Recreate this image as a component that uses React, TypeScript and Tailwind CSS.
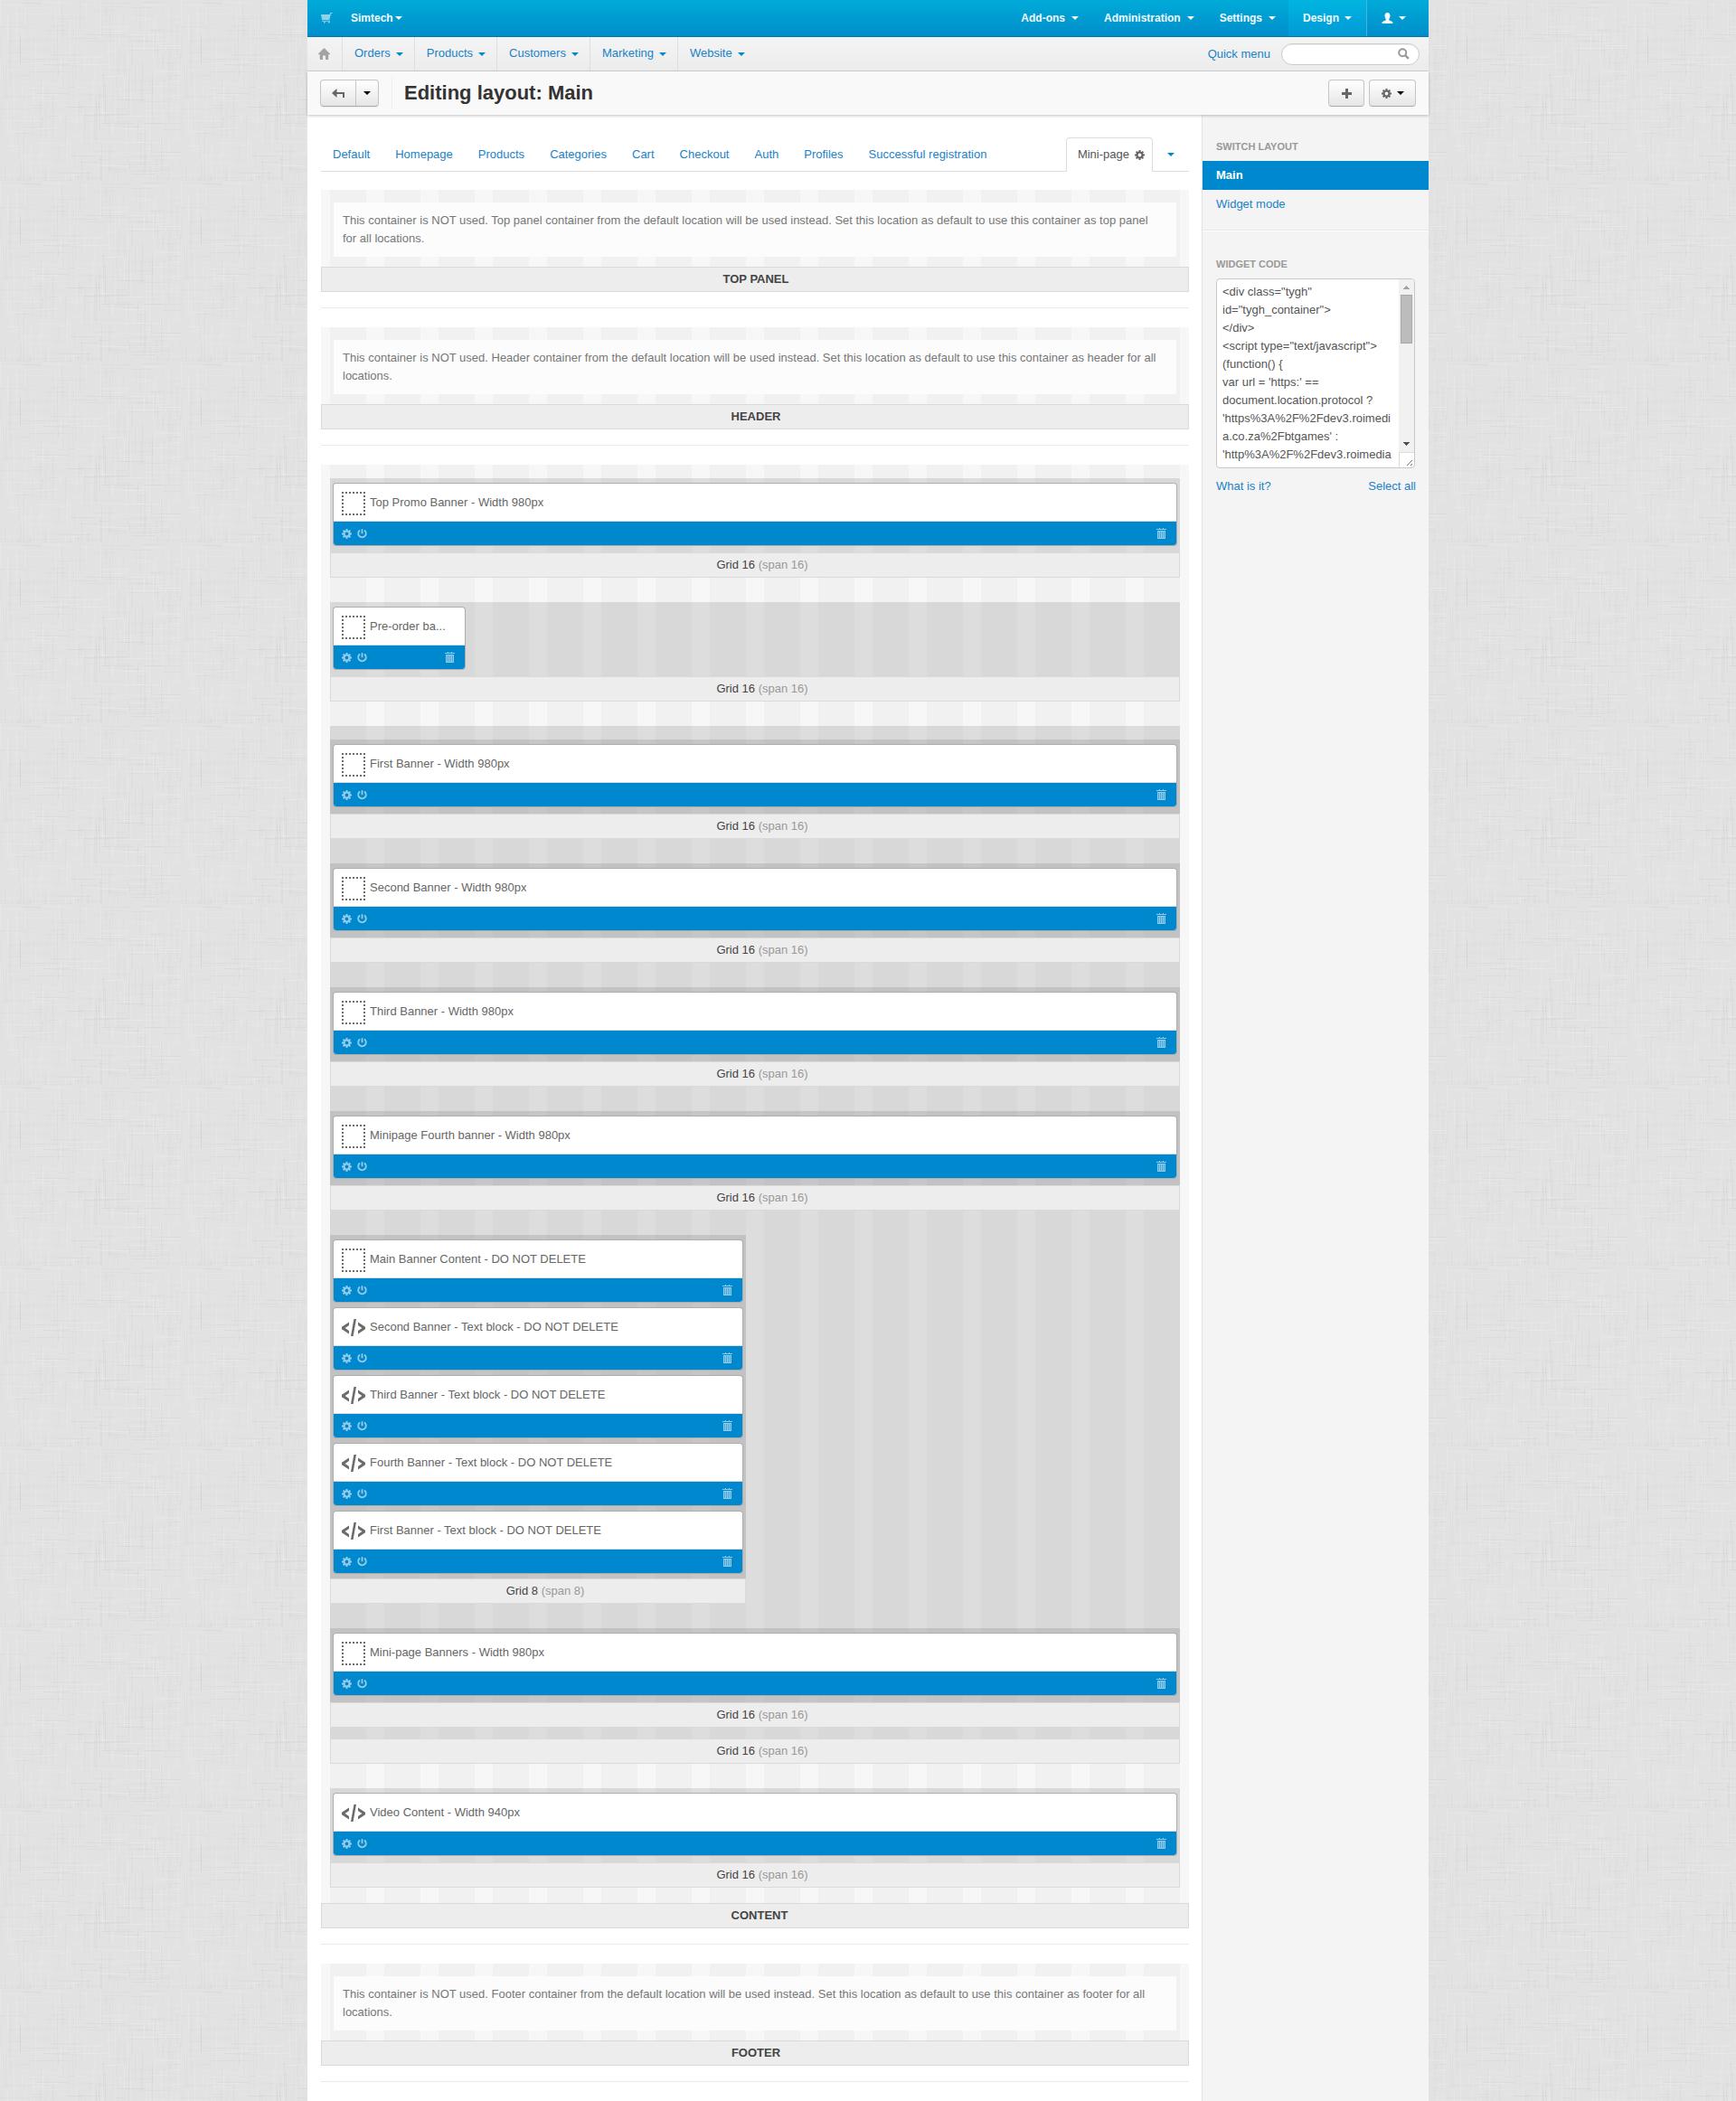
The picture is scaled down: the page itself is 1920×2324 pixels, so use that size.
import React from "react";

/* ---------- linen backdrop ---------- */

function makeThreads() {
  let seed = 4217;
  const rnd = () => {
    seed = (seed * 16807) % 2147483647;
    return seed / 2147483647;
  };
  const out: { x: number; y: number; w: number; h: number; dark: boolean; o: number }[] = [];
  for (let i = 0; i < 560; i++) {
    const horizontal = i % 2 === 0;
    const len = Math.round(8 + rnd() * 40);
    const x = Math.floor(rnd() * 200);
    const y = Math.floor(rnd() * 200);
    const dark = rnd() < 0.5;
    const o = dark ? 0.008 + rnd() * 0.022 : 0.06 + rnd() * 0.1;
    out.push({ x, y, w: horizontal ? len : 1, h: horizontal ? 1 : len, dark, o });
  }
  return out;
}
const threads = makeThreads();

function Linen() {
  return (
    <svg className="absolute inset-0 h-full w-full" aria-hidden="true" shapeRendering="crispEdges">
      <defs>
        <pattern id="linen" width="200" height="200" patternUnits="userSpaceOnUse">
          <rect width="200" height="200" fill="#e2e2e2" />
          {threads.map((t, i) => (
            <rect key={i} x={t.x} y={t.y} width={t.w} height={t.h} fill={t.dark ? "#000" : "#fff"} opacity={t.o} />
          ))}
        </pattern>
      </defs>
      <rect width="100%" height="100%" fill="url(#linen)" />
    </svg>
  );
}

/* ---------- icons ---------- */

function Caret({ className = "" }: { className?: string }) {
  return (
    <svg width="8" height="4" viewBox="0 0 8 4" fill="currentColor" className={`shrink-0 ${className}`} aria-hidden="true">
      <path d="M0 0h8L4 4z" />
    </svg>
  );
}

function Gear({ className = "" }: { className?: string }) {
  return (
    <svg width="11" height="11" viewBox="0 0 22 22" className={`shrink-0 ${className}`} aria-hidden="true">
      <circle cx="11" cy="11" r="6" fill="none" stroke="currentColor" strokeWidth="4.4" />
      <g stroke="currentColor" strokeWidth="4">
        <path d="M11 0v4M11 18v4M0 11h4M18 11h4M3.2 3.2l3 3M15.8 15.8l3 3M18.8 3.2l-3 3M6.2 15.8l-3 3" />
      </g>
    </svg>
  );
}

function Power() {
  return (
    <svg width="11" height="11" viewBox="0 0 11 11" fill="none" stroke="currentColor" strokeWidth="1.8" aria-hidden="true">
      <path d="M3 1.6A4.3 4.3 0 1 0 8 1.6M5.5 0.3v5" />
    </svg>
  );
}

function Trash() {
  return (
    <svg width="11" height="12" viewBox="0 0 11 12" fill="currentColor" shapeRendering="crispEdges" aria-hidden="true">
      <path d="M3 0h1v1H3zM7 0h1v1H7zM0 1h11v1H0zM1 3h9v1H1zM1 4h1v7H1zM3 4h1v7H3zM5 4h1v7H5zM7 4h1v7H7zM9 4h1v7H9zM1 11h9v1H1z" />
      <path d="M2 4h7v7H2z" opacity="0.45" />
    </svg>
  );
}

function Cart() {
  return (
    <svg width="13" height="12" viewBox="0 0 13 12" fill="currentColor" aria-hidden="true">
      <path d="M0 2h9.6L10.3 0H12.5v1H11L9.3 8H1.2zM1 8.8h9v.9H1zM3 10h1.6v1.6H3zM8 10h1.6v1.6H8z" />
    </svg>
  );
}

function Home() {
  return (
    <svg width="13" height="13" viewBox="0 0 13 13" fill="currentColor" aria-hidden="true">
      <path d="M6.5 0L13 6.5v.7h-1.8V13H8V8.5H5V13H1.8V7.2H0v-.7z" />
    </svg>
  );
}

function BackArrow() {
  return (
    <svg width="15" height="11" viewBox="0 0 15 11" aria-hidden="true">
      <path d="M0 5L5.5 0v10z" fill="currentColor" />
      <path d="M4 5h9v5" fill="none" stroke="currentColor" strokeWidth="2" />
    </svg>
  );
}

function Person() {
  return (
    <svg width="13" height="12" viewBox="0 0 13 12" fill="currentColor" aria-hidden="true">
      <path d="M6.5 0C8.600 0 9.500 1.300 9.500 3.200S8.900 6.200 8.300 6.900v1.300c.4.700 4.200 1.300 4.200 2.600V12H.5v-1.200c0-1.300 3.800-1.900 4.200-2.600V6.900C4.100 6.200 3.500 5.100 3.500 3.200S4.400 0 6.500 0z" />
    </svg>
  );
}

function Magnifier() {
  return (
    <svg width="13" height="13" viewBox="0 0 13 13" fill="none" stroke="#999" aria-hidden="true">
      <circle cx="5.200" cy="5.200" r="4" strokeWidth="2" />
      <path d="M8.300 8.300l3.600 3.600" strokeWidth="2.400" />
    </svg>
  );
}

function Plus() {
  return (
    <svg width="12" height="12" viewBox="0 0 12 12" fill="currentColor" shapeRendering="crispEdges" aria-hidden="true">
      <path d="M5 1h3v4h4v3H8v4H5V8H1V5h4z" />
    </svg>
  );
}

function DottedSquare() {
  return (
    <svg width="26" height="26" viewBox="0 0 26 26" stroke="#6b6b6b" strokeWidth="2" strokeDasharray="2 2" className="shrink-0" aria-hidden="true">
      <path d="M0 1h26M0 25h26M1 0v26M25 0v26" />
    </svg>
  );
}

function CodeIcon() {
  return (
    <svg width="26" height="26" viewBox="0 0 26 26" fill="#6b6b6b" className="shrink-0" aria-hidden="true">
      <path d="M8 6.500v3.600L3.600 13 8 15.900v3.600L0 14.300v-2.600zM18 6.500v3.600L22.400 13 18 15.900v3.600l8-5.200v-2.600z" />
      <path d="M13.400 3H16l-3.400 19H10z" />
    </svg>
  );
}

/* ---------- top bars ---------- */

function TopItem({ label }: { label: string }) {
  return (
    <button type="button" className="flex h-10 items-center gap-[7px] px-3.5">
      {label}
      <Caret />
    </button>
  );
}

function TopBar() {
  return (
    <header className="flex h-[41px] items-stretch border-b border-[#0278ab] bg-linear-to-b from-[#00abd8] to-[#008dca] pl-[15px] text-[12px] font-bold text-[#f2fafd]">
      <a href="#store" aria-label="Storefront" className="flex items-center text-white/55">
        <Cart />
      </a>
      <button type="button" className="ml-5 flex items-center gap-0.5">
        Simtech
        <Caret />
      </button>
      <nav className="ml-auto flex">
        <TopItem label="Add-ons" />
        <TopItem label="Administration" />
        <TopItem label="Settings" />
        <button type="button" className="flex h-10 items-center gap-1.5 border-r border-[#4db1e0] bg-linear-to-b from-[#00b5e0] to-[#0099d6] pr-4 pl-4">
          Design
          <Caret />
        </button>
        <button type="button" aria-label="Account" className="flex h-10 items-center gap-1.5 pr-[25px] pl-4">
          <Person />
          <Caret />
        </button>
      </nav>
    </header>
  );
}

function NavBar() {
  return (
    <div className="flex h-[38px] items-stretch border-b border-[#d5d5d5] bg-linear-to-b from-[#f4f4f4] to-[#ececec] text-[13px] text-[#1a82c8]">
      <a href="#home" aria-label="Home" className="flex w-[39px] items-center border-r border-[#dedede] pl-3 text-[#a3a3a3]">
        <Home />
      </a>
      {["Orders", "Products", "Customers", "Marketing", "Website"].map((t, i) => (
        <button
          type="button"
          key={t}
          className={`flex items-center gap-1.5 pr-3 pb-0.5 pl-[13px] ${i < 4 ? "border-r border-[#dedede]" : ""}`}
        >
          {t}
          <Caret className="mt-0.5 text-[#0088cc]" />
        </button>
      ))}
      <div className="ml-auto flex items-center gap-3 pr-2.5">
        <a href="#quick">Quick menu</a>
        <label className="flex h-6 w-[153px] items-center rounded-full border border-[#ccc] bg-white pr-2.5 pl-3 shadow-[inset_0_1px_1px_rgba(0,0,0,0.075)]">
          <input type="text" aria-label="Search" className="min-w-0 flex-1 bg-transparent outline-none" />
          <Magnifier />
        </label>
      </div>
    </div>
  );
}

function TitleBar() {
  return (
    <div className="relative flex h-12 items-center bg-[#f9f9f9] pr-3.5 pl-3.5 shadow-[0_1px_3px_rgba(0,0,0,0.25)]">
      <div className="flex h-[30px] overflow-hidden rounded border border-[#c5c5c5] border-b-[#aaa] bg-linear-to-b from-white to-[#e6e6e6] shadow-[0_1px_1px_rgba(0,0,0,0.05)]">
        <button type="button" aria-label="Back" className="flex w-[39px] items-center justify-center border-r border-[#c5c5c5] text-[#666]">
          <BackArrow />
        </button>
        <button type="button" aria-label="Back options" className="flex w-6 items-center justify-center text-black">
          <Caret />
        </button>
      </div>
      <div className="ml-3.5 h-9 w-px bg-[#ededed]" />
      <h1 className="ml-[13px] text-[22px] leading-6 font-bold text-[#333]">Editing layout: Main</h1>
      <div className="ml-auto flex gap-[5px]">
        <button type="button" aria-label="Add" className="flex h-[30px] w-10 items-center justify-center rounded border border-[#c5c5c5] border-b-[#aaa] bg-linear-to-b from-white to-[#e6e6e6] text-[#666]">
          <Plus />
        </button>
        <button type="button" aria-label="Settings" className="flex h-[30px] w-[52px] items-center justify-center gap-1.5 rounded border border-[#c5c5c5] border-b-[#aaa] bg-linear-to-b from-white to-[#e6e6e6] text-[#666]">
          <Gear />
          <Caret className="text-black" />
        </button>
      </div>
    </div>
  );
}

/* ---------- layout editor ---------- */

const locations = ["Default", "Homepage", "Products", "Categories", "Cart", "Checkout", "Auth", "Profiles", "Successful registration"];

function Tabs() {
  return (
    <nav className="flex h-[38px] border-b border-[#dcdcdc] text-[13px] leading-5 text-[#1a82c8]">
      {locations.map((t) => (
        <a key={t} href="#location" className="mr-0.5 px-[13px] pt-[9px] whitespace-nowrap">
          {t}
        </a>
      ))}
      <a href="#mini-page" aria-current="page" className="-mb-px ml-auto flex h-[38px] gap-1.5 rounded-t border border-b-0 border-[#ddd] bg-white pt-2 pr-2 pl-3 text-[#555]">
        Mini-page
        <Gear className="mt-[5px] text-[#666]" />
      </a>
      <button type="button" aria-label="More locations" className="flex w-10 items-center justify-center text-[#0088cc]">
        <Caret />
      </button>
    </nav>
  );
}

function Block({ title, kind = "banner", narrow = false }: { title: string; kind?: "banner" | "code"; narrow?: boolean }) {
  return (
    <div className={`overflow-hidden rounded-[3px] bg-white shadow-[0_0_0_1px_#adadad] ${narrow ? "w-[145px]" : ""}`}>
      <div className="flex h-[42px] gap-[5px] border-b border-[#ddd] pt-[9px] pl-[9px]">
        {kind === "code" ? <CodeIcon /> : <DottedSquare />}
        <span className="mt-0.5 truncate text-[13px] leading-5 text-[#666]">{title}</span>
      </div>
      <div className="flex h-[26px] items-center gap-1.5 bg-[#0088cf] pr-[11px] pl-[9px] text-[#93cceb]">
        <button type="button" aria-label="Block settings">
          <Gear />
        </button>
        <button type="button" aria-label="Toggle block">
          <Power />
        </button>
        <button type="button" aria-label="Delete block" className="ml-auto">
          <Trash />
        </button>
      </div>
    </div>
  );
}

function GridLabel({ span = 16 }: { span?: number }) {
  return (
    <div className="h-7 border border-[#dadada] bg-[#ededed] pt-[3px] pl-4 text-center text-[13px] leading-5 text-[#444]">
      Grid {span} <span className="text-[#999]">(span {span})</span>
    </div>
  );
}

function Grid({ children, span = 16, half = false }: { children: React.ReactNode; span?: number; half?: boolean }) {
  return (
    <div className={half ? "w-[460px]" : ""}>
      <div className="flex min-h-[82px] flex-col gap-[7px] bg-black/10 px-1 py-1.5">{children}</div>
      <GridLabel span={span} />
    </div>
  );
}

const stripes =
  "bg-[repeating-linear-gradient(to_right,#f7f7f7_0,#f7f7f7_10px,#f1f1f1_10px,#f1f1f1_50px,#f7f7f7_50px,#f7f7f7_60px)]";

function ContainerLabel({ children, shifted = false }: { children: string; shifted?: boolean }) {
  return (
    <h2 className={`h-7 border border-[#dadada] bg-[#ededed] pt-[3px] text-center text-[13px] leading-5 font-bold text-[#444] ${shifted ? "pl-2.5" : "pl-0.5"}`}>
      {children}
    </h2>
  );
}

function Unused({ label, children }: { label: string; children: string }) {
  return (
    <section className="mb-[21px] border-b border-[#eaeaea] pb-[17px]">
      <div className={`px-3.5 pt-3.5 pb-[11px] ${stripes}`}>
        <p className="min-h-[60px] bg-[#fcfcfc] py-2.5 pr-5 pl-2.5 text-[13px] leading-5 text-[#777]">{children}</p>
      </div>
      <ContainerLabel>{label}</ContainerLabel>
    </section>
  );
}

function Content() {
  return (
    <section className="mb-[21px] border-b border-[#eaeaea] pb-[17px]">
      <div className={`flex flex-col gap-[27px] px-2.5 pt-[15px] pb-[17px] ${stripes}`}>
        <Grid>
          <Block title="Top Promo Banner - Width 980px" />
        </Grid>
        <Grid>
          <Block title="Pre-order ba..." narrow />
        </Grid>
        <div>
          <div className="flex flex-col gap-[27px] bg-black/10 pt-[15px] pb-3">
            <Grid>
              <Block title="First Banner - Width 980px" />
            </Grid>
            <Grid>
              <Block title="Second Banner - Width 980px" />
            </Grid>
            <Grid>
              <Block title="Third Banner - Width 980px" />
            </Grid>
            <Grid>
              <Block title="Minipage Fourth banner - Width 980px" />
            </Grid>
            <Grid span={8} half>
              <Block title="Main Banner Content - DO NOT DELETE" />
              <Block kind="code" title="Second Banner - Text block - DO NOT DELETE" />
              <Block kind="code" title="Third Banner - Text block - DO NOT DELETE" />
              <Block kind="code" title="Fourth Banner - Text block - DO NOT DELETE" />
              <Block kind="code" title="First Banner - Text block - DO NOT DELETE" />
            </Grid>
            <Grid>
              <Block title="Mini-page Banners - Width 980px" />
            </Grid>
          </div>
          <GridLabel />
        </div>
        <Grid>
          <Block kind="code" title="Video Content - Width 940px" />
        </Grid>
      </div>
      <ContainerLabel shifted>CONTENT</ContainerLabel>
    </section>
  );
}

/* ---------- sidebar ---------- */

const widgetCode = `<div class="tygh"
id="tygh_container">
</div>
<script type="text/javascript">
(function() {
var url = 'https:' ==
document.location.protocol ?
'https%3A%2F%2Fdev3.roimedi
a.co.za%2Fbtgames' :
'http%3A%2F%2Fdev3.roimedia`;

function Sidebar() {
  return (
    <aside className="w-[251px] shrink-0 border-l border-[#e3e3e3] bg-[#f4f4f4] pt-[25px] text-[13px] leading-5 text-[#1a82c8]">
      <h2 className="pl-[15px] text-[11px] leading-5 font-bold text-[#999]">SWITCH LAYOUT</h2>
      <ul className="mt-1.5 border-b border-[#e8e8e8] pb-3">
        <li>
          <a href="#main" aria-current="page" className="block bg-[#0088cf] px-[15px] py-1.5 font-bold text-white">
            Main
          </a>
        </li>
        <li>
          <a href="#widget" className="block px-[15px] py-1.5">
            Widget mode
          </a>
        </li>
      </ul>
      <div className="border-t border-white pt-[26px] pr-3.5 pl-[15px]">
        <h2 className="text-[11px] leading-5 font-bold text-[#999]">
          <label htmlFor="code">WIDGET CODE</label>
        </h2>
        <div className="mt-1.5 mr-px flex h-[210px] overflow-hidden rounded border border-[#c8c8c8] bg-white">
          <textarea
            id="code"
            readOnly
            defaultValue={widgetCode}
            className="min-w-0 flex-1 resize-none overflow-hidden pt-1 pl-1.5 text-[13px] leading-5 whitespace-pre text-[#555] outline-none"
          />
          <svg width="17" height="208" viewBox="0 0 17 208" className="shrink-0" shapeRendering="crispEdges" aria-hidden="true">
            <rect width="17" height="191" fill="#f1f1f1" />
            <path d="M5 11h7L8.500 7z" fill="#a3a3a3" />
            <rect x="2.500" y="17.500" width="12" height="53" fill="#bcbcbc" stroke="#a8a8a8" />
            <path d="M5 180h7l-3.500 4z" fill="#505050" />
            <path d="M0.500 208V191.500H17" fill="none" stroke="#dcdcdc" />
            <path d="M9 206l6-6M13 206l2-2" stroke="#777" fill="none" shapeRendering="auto" />
          </svg>
        </div>
        <div className="mt-2.5 flex justify-between">
          <a href="#help">What is it?</a>
          <button type="button">Select all</button>
        </div>
      </div>
    </aside>
  );
}

export default function App() {
  return (
    <div className="relative min-h-screen font-['Liberation_Sans',Arial,sans-serif]">
      <Linen />
      <div className="relative mx-auto flex min-h-screen max-w-[1240px] flex-col bg-white">
        <TopBar />
        <NavBar />
        <TitleBar />
        <div className="flex flex-1">
          <main className="min-w-0 flex-1 pt-[25px] pr-3.5 pl-[15px]">
            <Tabs />
            <div className="pt-5">
              <Unused label="TOP PANEL">
                This container is NOT used. Top panel container from the default location will be used instead. Set this location as default to use this container as top panel for all locations.
              </Unused>
              <Unused label="HEADER">
                This container is NOT used. Header container from the default location will be used instead. Set this location as default to use this container as header for all locations.
              </Unused>
              <Content />
              <Unused label="FOOTER">
                This container is NOT used. Footer container from the default location will be used instead. Set this location as default to use this container as footer for all locations.
              </Unused>
            </div>
          </main>
          <Sidebar />
        </div>
      </div>
    </div>
  );
}
